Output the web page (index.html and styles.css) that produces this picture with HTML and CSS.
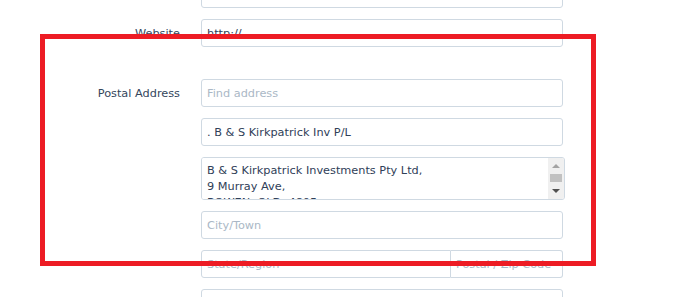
FILE: index.html
```html
<!DOCTYPE html>
<html lang="en">
<head>
  <meta charset="UTF-8">
  <title>Contact details</title>
  <link rel="stylesheet" href="styles.css">
</head>
<body>
  <div class="form">
    <div class="row">
      <label>Company Type</label>
      <input type="text" placeholder="e.g. Pty Ltd / Trust" />
    </div>
    <div class="row">
      <label>Website</label>
      <input type="text" value="http://" />
    </div>

    <div class="section">
      <div class="row">
        <label>Postal Address</label>
        <input type="text" placeholder="Find address" />
      </div>
      <div class="row">
        <span></span>
        <input type="text" value=". B &amp; S Kirkpatrick Inv P/L" />
      </div>
      <div class="row">
        <span></span>
        <div class="memo">
          <textarea>B &amp; S Kirkpatrick Investments Pty Ltd,
9 Murray Ave,
BOWEN  QLD  4805</textarea>
          <div class="scrollbar">
            <div class="arrow up"></div>
            <div class="track"><div class="thumb"></div></div>
            <div class="arrow down"></div>
          </div>
        </div>
      </div>
      <div class="row">
        <span></span>
        <input type="text" placeholder="City/Town" />
      </div>
      <div class="row">
        <span></span>
        <div class="split">
          <input type="text" placeholder="State/Region" />
          <input type="text" placeholder="Postal / Zip Code" />
        </div>
      </div>
      <div class="row">
        <span></span>
        <input type="text" />
      </div>
    </div>
  </div>

  <div class="highlight"></div>
</body>
</html>
```

FILE: styles.css
```css
body { margin: 0; background: white; font-family: "DejaVu Sans", Verdana, sans-serif; font-size: 11.3px; color: #34495e; overflow: hidden; }
.form { display: flex; flex-direction: column; gap: 11px; margin-top: -20px; }
.section { display: flex; flex-direction: column; gap: 11px; margin-top: 21px; }
.row { display: grid; grid-template-columns: 180px 362px; column-gap: 21px; align-items: center; }
.row label { text-align: right; color: #34465c; }
input, textarea { box-sizing: border-box; width: 100%; height: 28px; padding: 0 5px; border: 1px solid #cfd9e2; border-radius: 3px; font-family: inherit; font-size: 11.3px; color: #2f4058; background: white; outline: none; }
input::placeholder { color: #aab8c6; }
.memo { box-sizing: border-box; display: flex; width: 364px; height: 43px; border: 1px solid #cfd9e2; border-radius: 3px; overflow: hidden; }
.memo textarea { flex: 1; height: 100%; border: none; border-radius: 0; padding: 5px 5px; line-height: 16px; resize: none; overflow: hidden; }
.scrollbar { width: 16px; display: flex; flex-direction: column; background: #f0f0f0; }
.arrow { height: 15px; display: flex; align-items: center; justify-content: center; }
.arrow::before { content: ""; border-left: 4px solid transparent; border-right: 4px solid transparent; }
.arrow.up::before { border-bottom: 4px solid #a3a3a3; margin-top: 1px; }
.arrow.down::before { border-top: 4px solid #505050; margin-bottom: 1px; }
.track { flex: 1; padding: 1px 2px 0; }
.thumb { height: 8px; background: #c1c1c1; }
.split { display: flex; }
.split input { border-radius: 3px 0 0 3px; }
.split input + input { width: 112px; flex: none; border-left: none; border-radius: 0 3px 3px 0; }
.highlight { position: absolute; left: 40px; top: 34px; width: 556px; height: 232px; box-sizing: border-box; border: 5px solid #ed1c24; }
```
